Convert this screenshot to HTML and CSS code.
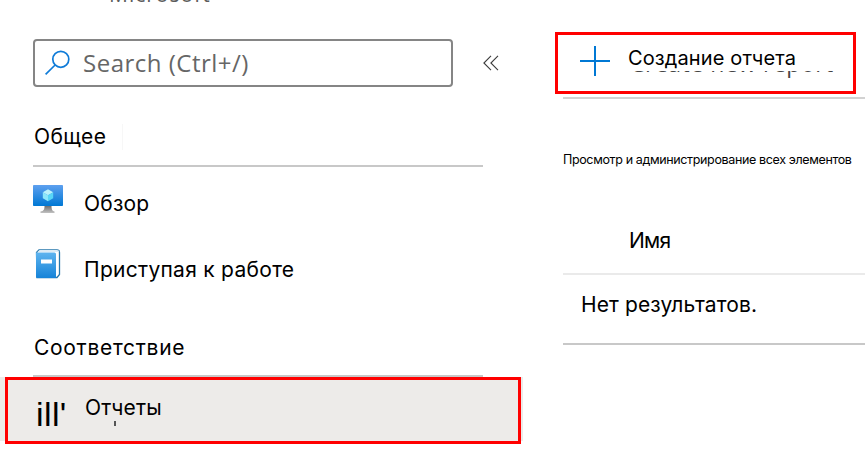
FILE: index.html
```html
<!DOCTYPE html>
<html lang="ru">
<head>
<meta charset="utf-8">
<title>Отчеты</title>
<link rel="stylesheet" href="styles.css">
</head>
<body>
<div class="page">
  <aside class="sidebar">
    <div class="brand"><span>Microsoft</span></div>
    <div class="search-row">
      <div class="search">
        <svg class="search-icon" width="26" height="26" viewBox="0 0 26 26" fill="none" stroke="#0f7bd8" stroke-width="1.7"><circle cx="15.800" cy="10.300" r="8"/><path d="M10.100 16 .6 25.300"/></svg>
        <span class="search-text">Search (Ctrl+/)</span>
      </div>
      <svg class="collapse" width="16" height="16" viewBox="0 0 16 16" fill="none" stroke="#3c3c3c" stroke-width="1.1"><path d="M8 .8.9 8 8 15.2M15 .8 7.9 8l7.1 7.2"/></svg>
    </div>
    <h2 class="heading general"><span>Общее</span></h2>
    <nav class="items">
      <a class="item overview">
        <svg width="30" height="28" viewBox="0 0 30 28">
          <defs>
            <linearGradient id="screen" x1="0" y1="0" x2="0" y2="1"><stop offset="0" stop-color="#5ea0ef"/><stop offset="1" stop-color="#0078d4"/></linearGradient>
            <linearGradient id="stand" x1="0" y1="0" x2="0" y2="1"><stop offset="0" stop-color="#707070"/><stop offset="1" stop-color="#c2c2c2"/></linearGradient>
          </defs>
          <rect width="30" height="21" rx=".8" fill="url(#screen)"/>
          <path d="M11.500 21h7c0 3 .5 5 3 5.600V28h-14v-1.400c3.500-.6 4-2.600 4-5.600z" fill="url(#stand)"/>
          <path d="m15 4.300 5.200 3-5.200 3-5.200-3z" fill="#b9f1fb"/>
          <path d="m9.800 7.300 5.200 3v6l-5.200-3z" fill="#8ce7fa"/>
          <path d="m20.200 7.300-5.200 3v6l5.200-3z" fill="#58d6f7"/>
        </svg>
        <span>Обзор</span>
      </a>
      <a class="item start">
        <svg width="30" height="30" viewBox="0 0 30 30">
          <defs><linearGradient id="cover" x1="0" y1="0" x2="0" y2="1"><stop offset="0" stop-color="#5eb4ef"/><stop offset="1" stop-color="#1683d8"/></linearGradient></defs>
          <path d="M3.500 3.500 6 1h18q2.500 0 2.500 2.500v22L24 28.500H4z" fill="#fff" stroke="#2878ac" stroke-width="1.300"/>
          <path d="M5 2.500 6.500 1H24q2 0 2.400 1.800L24 3H4.500z" fill="#dcebf5"/>
          <path d="M3 3.500h18.500q1.500 0 1.500 1.500v24H4.500Q3 29 3 27.500z" fill="url(#cover)"/>
          <path d="M8 10.500h11v4H8z" fill="#fff"/>
        </svg>
        <span>Приступая к работе</span>
      </a>
    </nav>
    <h2 class="heading compliance"><span>Соответствие</span></h2>
    <a class="item active">
      <span class="bars">ill'</span>
      <span class="active-label">Отчеты<span class="tick"></span></span>
      <span class="outline"></span>
    </a>
  </aside>
  <main class="content">
    <div class="toolbar">
      <svg width="30" height="30" viewBox="0 0 30 30" stroke="#0078d4" stroke-width="2"><path d="M15 0v30M0 15h30"/></svg>
      <div class="create"><span class="create-label">Создание отчета</span><span class="underlay"><span>Create new report</span></span></div>
    </div>
    <p class="intro"><span>Просмотр и администрирование всех элементов</span></p>
    <div class="column-name"><span>Имя</span></div>
    <div class="empty"><span>Нет результатов.</span></div>
  </main>
</div>
</body>
</html>
```
FILE: styles.css
```css
* { box-sizing: border-box; }
body {
  margin: 0;
  background: #fff;
  color: #000;
  font: 21px/26px Inter, "Noto Sans", sans-serif;
  overflow: hidden;
}
h2, p { margin: 0; font-weight: 400; }
svg { display: block; flex: none; }
span { white-space: nowrap; }
.page { display: flex; width: 865px; height: 469px; overflow: hidden; }
.sidebar { width: 523px; margin-right: 32px; flex: none; }
.brand { height: 39px; padding-left: 109px; overflow: hidden; }
.brand span {
  display: block;
  margin-top: -19px;
  font: 21px/26px "Open Sans", sans-serif;
  letter-spacing: 1px;
  color: #5c5c5c;
}
.search-row { display: flex; align-items: center; height: 48px; padding-left: 33px; gap: 30px; }
.search {
  display: flex;
  width: 420px;
  height: 48px;
  padding: 8px 10px;
  gap: 12px;
  border: 2px solid #858585;
  border-radius: 4px;
}
.search-text { font: 24px/28px "Open Sans", sans-serif; letter-spacing: .5px; color: #666; }
.heading { margin-left: 33px; width: 450px; border-bottom: 2px solid #c8c8c8; font-size: 21px; line-height: 26px; padding-left: 1px; }
.general { height: 80px; padding-top: 37px; letter-spacing: .4px; }
.general span { display: inline-block; width: 89px; border-right: 1px solid #f7f7f7; }
.item { display: flex; padding-left: 33px; gap: 21px; }
.overview { height: 79px; padding-top: 18px; letter-spacing: .2px; }
.overview span { margin-top: 6px; }
.start { height: 88px; padding-top: 3px; letter-spacing: .28px; }
.start span { margin-top: 8px; }
.compliance { height: 43px; padding-top: 1px; letter-spacing: .7px; }
.active { position: relative; height: 64px; background: #edebe9; padding-left: 36px; gap: 17px; letter-spacing: .2px; }
.bars { width: 32px; margin-top: 18px; font: 34px/38px "Liberation Sans", sans-serif; letter-spacing: .4px; }
.active-label { position: relative; margin-top: 18px; }
.tick { position: absolute; left: 29px; top: 26px; width: 2px; height: 5px; background: #555; }
.outline { position: absolute; left: 5px; top: 0; width: 516px; height: 67px; border: 3px solid #f00; }
.content { width: 310px; flex: none; }
.toolbar {
  display: flex;
  width: 301px;
  height: 62px;
  margin-top: 32px;
  padding: 11px 22px;
  gap: 18px;
  border: 3px solid #f00;
}
.create { position: relative; font-size: 20px; line-height: 26px; letter-spacing: .12px; }
.create-label { display: block; margin-top: -1px; }
.underlay { position: absolute; left: 2px; top: 25px; width: 215px; height: 9px; overflow: hidden; }
.underlay span { display: block; margin-top: -21px; font: 23px/26px "Open Sans", sans-serif; letter-spacing: .5px; color: #444; }
.intro { margin: 3px 0 0 8px; height: 117px; padding-top: 51px; border-top: 2px solid #d2d2d2; font-size: 12.5px; line-height: 20px; letter-spacing: -.36px; }
.column-name { margin-left: 8px; height: 61px; padding: 14px 0 0 66px; border-bottom: 2px solid #eaeaea; letter-spacing: -.7px; }
.empty { margin-left: 8px; height: 70px; padding: 17px 0 0 18px; border-bottom: 2px solid #c8c8c8; letter-spacing: .1px; }
```
